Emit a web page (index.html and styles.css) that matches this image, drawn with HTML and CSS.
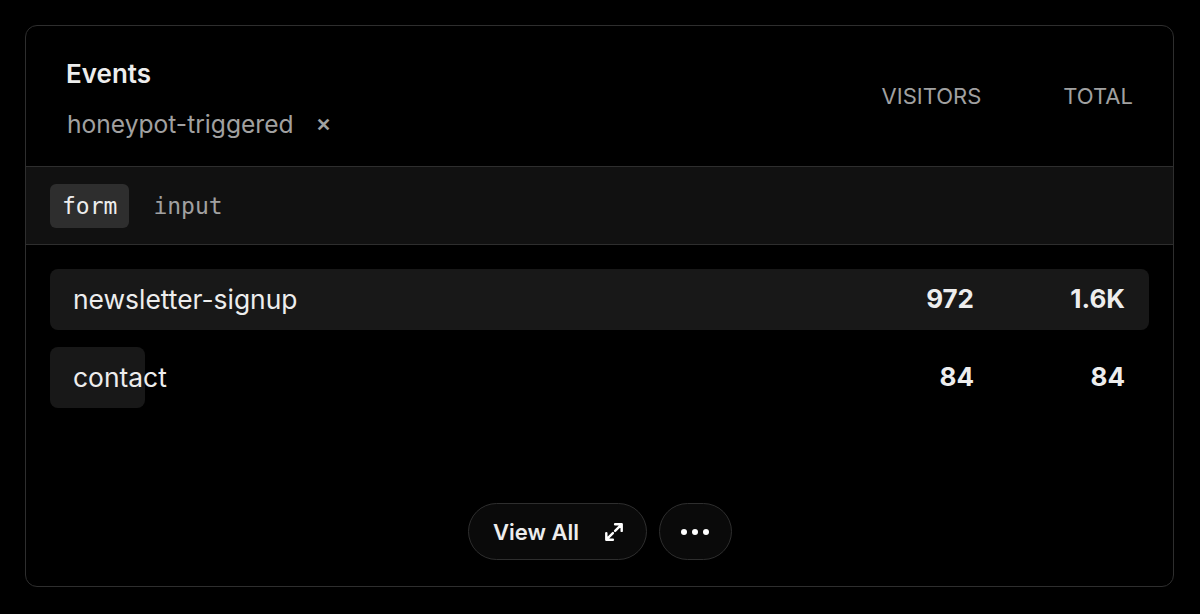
FILE: index.html
```html
<!DOCTYPE html>
<html>
<head>
<meta charset="utf-8">
<link rel="stylesheet" href="styles.css">
</head>
<body>
<div class="card">
  <div class="header">
    <div class="title-block">
      <div class="title">Events</div>
      <div class="filter">
        <span class="filter-name">honeypot-triggered</span>
        <span class="filter-x">&#x2715;</span>
      </div>
    </div>
    <div class="cols">
      <span class="col col-visitors">VISITORS</span>
      <span class="col col-total">TOTAL</span>
    </div>
  </div>
  <div class="tabs">
    <span class="tab active">form</span>
    <span class="tab">input</span>
  </div>
  <div class="rows">
    <div class="row">
      <div class="bar" style="width:100%"></div>
      <span class="label">newsletter-signup</span>
      <span class="num num-visitors">972</span>
      <span class="num num-total">1.6K</span>
    </div>
    <div class="row">
      <div class="bar" style="width:8.6%"></div>
      <span class="label">contact</span>
      <span class="num num-visitors">84</span>
      <span class="num num-total">84</span>
    </div>
  </div>
  <div class="footer">
    <button class="btn btn-view">View All
      <svg width="22" height="22" viewBox="0 0 20 20" fill="none" stroke="#fff" stroke-width="2.2" stroke-linecap="round" stroke-linejoin="round">
        <path d="M11 3h6v6M17 3l-6 6M9 17H3v-6M3 17l6-6"/>
      </svg>
    </button>
    <button class="btn btn-more">
      <svg width="30" height="8" viewBox="0 0 30 8" fill="#fff">
        <circle cx="4" cy="4" r="3"/><circle cx="15" cy="4" r="3"/><circle cx="26" cy="4" r="3"/>
      </svg>
    </button>
  </div>
</div>
</body>
</html>
```

FILE: styles.css
```css
* { box-sizing: border-box; }
html, body { margin: 0; background: #000; }
body {
  padding: 25px 26px 27px 25px;
  font-family: Inter, "Liberation Sans", sans-serif;
  color: #ededed;
}
.card {
  height: 562px;
  border: 1px solid #2e2e2e;
  border-radius: 12px;
  background: #000;
  display: flex;
  flex-direction: column;
  overflow: hidden;
}
.header {
  height: 141px;
  display: flex;
  justify-content: space-between;
  align-items: flex-start;
  padding: 32px 40px 0 40px;
  border-bottom: 1px solid #2e2e2e;
}
.title {
  font-size: 26px;
  font-weight: 600;
  line-height: 32px;
  color: #ededed;
}
.filter {
  margin-top: 18px;
  display: flex;
  align-items: center;
  gap: 22px;
  padding-left: 1px;
}
.filter-name {
  font-size: 24.6px;
  line-height: 32px;
  color: #a1a1a1;
}
.filter-x {
  font-size: 18px;
  color: #a1a1a1;
  font-weight: 600;
}
.cols {
  display: flex;
  margin-top: 24px;
  font-size: 22px;
  line-height: 28px;
  color: #a1a1a1;
}
.col-total { margin-left: 82px; }
.tabs {
  height: 78px;
  background: #111;
  border-bottom: 1px solid #2e2e2e;
  display: flex;
  align-items: center;
  gap: 12px;
  padding-left: 24px;
}
.tab {
  font-family: "DejaVu Sans Mono", "Liberation Mono", monospace;
  font-size: 23px;
  color: #a1a1a1;
  padding: 0 12px 0 12px;
  height: 44px;
  line-height: 44px;
  border-radius: 6px;
}
.tab.active {
  background: #2e2e2e;
  color: #ededed;
}
.rows {
  padding: 24px 24px 0 24px;
  display: flex;
  flex-direction: column;
  gap: 17px;
}
.row {
  position: relative;
  height: 61px;
  display: flex;
  align-items: center;
  padding: 0 24px 2px 23px;
}
.bar {
  position: absolute;
  left: 0; top: 0; bottom: 0;
  background: #181818;
  border-radius: 8px;
}
.label {
  position: relative;
  flex: 1;
  font-size: 26.4px;
  color: #ededed;
}
.num {
  position: relative;
  font-size: 26px;
  font-weight: 700;
  text-align: right;
  color: #ededed;
}
.num-visitors { width: 100px; }
.num-total { width: 151px; }
.footer {
  margin-top: auto;
  padding-bottom: 26px;
  display: flex;
  justify-content: center;
  gap: 12px;
}
.btn {
  height: 57px;
  border: 1.5px solid #2e2e2e;
  background: #0a0a0a;
  border-radius: 999px;
  color: #ededed;
  font-family: inherit;
  display: flex;
  align-items: center;
  justify-content: center;
}
.btn-view {
  width: 179px;
  font-size: 22px;
  font-weight: 600;
  gap: 24px;
  padding: 0 0 0 4px;
}
.btn-more { width: 73px; }
```
